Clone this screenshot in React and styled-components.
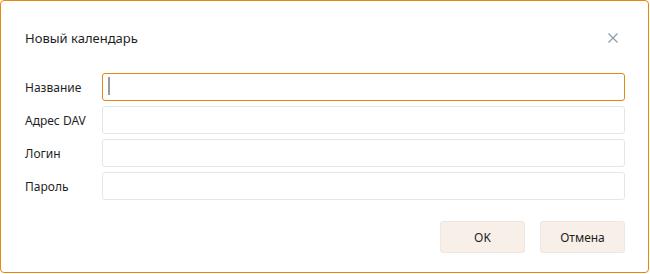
import React from 'react';
import styled, { createGlobalStyle } from 'styled-components';

const GlobalStyle = createGlobalStyle`
  html, body {
    margin: 0;
    padding: 0;
    background: #ffffff;
  }
  body {
    font-family: "Noto Sans", "Open Sans", sans-serif;
    font-size: 13px;
    color: #1f1f1f;
  }
`;

const Dialog = styled.div`
  box-sizing: border-box;
  width: 649px;
  height: 273px;
  border: 1px solid #e8870e;
  border-radius: 4px;
  background: #fff;
  padding: 0 23px 0 24px;
  display: flex;
  flex-direction: column;
`;

const Header = styled.div`
  height: 72px;
  padding-top: 2px;
  box-sizing: border-box;
  display: flex;
  align-items: center;
  justify-content: space-between;
`;

const Title = styled.div`
  font-size: 13px;
  color: #1f1f1f;
`;

const CloseButton = styled.button`
  border: 0;
  background: none;
  padding: 0;
  margin-right: 7px;
  width: 10px;
  height: 10px;
  display: flex;
  cursor: pointer;
`;

const Form = styled.div`
  display: flex;
  flex-direction: column;
  gap: 5px;
`;

const Row = styled.label`
  display: grid;
  grid-template-columns: 77px 1fr;
  align-items: center;
  height: 28px;
`;

const Label = styled.span`
  font-size: 12px;
  color: #1f1f1f;
`;

const InputWrap = styled.div`
  position: relative;
  height: 28px;
`;

const Input = styled.input`
  box-sizing: border-box;
  width: 100%;
  height: 28px;
  border: 1px solid ${p => (p.$focused ? '#e8870e' : '#e3e7ec')};
  border-radius: 3px;
  outline: none;
  padding: 0 6px;
  font: inherit;
  caret-color: transparent;
`;

const Caret = styled.span`
  position: absolute;
  left: 6px;
  top: 4px;
  width: 2px;
  height: 18px;
  background: #9a9a9a;
`;

const Footer = styled.div`
  display: flex;
  justify-content: flex-end;
  gap: 15px;
  margin-top: 21px;
`;

const Button = styled.button`
  box-sizing: border-box;
  width: 85px;
  height: 32px;
  border: 1px solid #ebe7e3;
  border-radius: 3px;
  background: #f8f0e8;
  font-family: inherit;
  font-size: 12px;
  color: #1f1f1f;
  cursor: pointer;
`;

const fields = ['Название', 'Адрес DAV', 'Логин', 'Пароль'];

export default function App() {
  return (
    <>
      <GlobalStyle />
      <Dialog>
        <Header>
          <Title>Новый календарь</Title>
          <CloseButton aria-label="Закрыть">
            <svg width="10" height="10" viewBox="0 0 10 10">
              <path d="M0.5 0.5 L9.5 9.5 M9.5 0.5 L0.5 9.5" stroke="#8a9cac" strokeWidth="1.2" fill="none" />
            </svg>
          </CloseButton>
        </Header>
        <Form>
          {fields.map((name, i) => (
            <Row key={name}>
              <Label>{name}</Label>
              <InputWrap>
                <Input $focused={i === 0} type={name === 'Пароль' ? 'password' : 'text'} />
                {i === 0 && <Caret />}
              </InputWrap>
            </Row>
          ))}
        </Form>
        <Footer>
          <Button>OK</Button>
          <Button>Отмена</Button>
        </Footer>
      </Dialog>
    </>
  );
}
